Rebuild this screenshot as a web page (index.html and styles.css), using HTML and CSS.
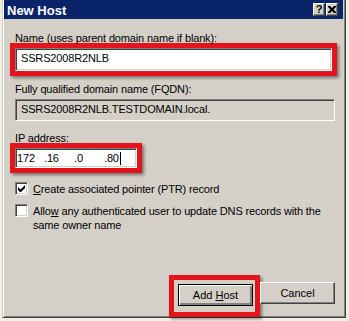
FILE: index.html
```html
<!DOCTYPE html>
<html lang="en">
<head>
    <meta charset="UTF-8">
    <title>New Host</title>
    <link rel="stylesheet" href="styles.css">
</head>
<body>
    <div class="window">
        <div class="titlebar">
            <span class="title">New Host</span>
            <div class="title-buttons">
                <span class="tbtn help">?</span>
                <span class="tbtn close">
                    <svg width="8" height="7" viewBox="0 0 8 7">
                        <path d="M0 0h2l2 2 2-2h2v1l-2.5 2.5L8 6v1H6L4 5 2 7H0V6l2.5-2.5L0 1z" fill="#000"/>
                    </svg>
                </span>
            </div>
        </div>

        <div class="content">
            <div class="label">Name (uses parent domain name if blank):</div>
            <div class="mark mark-name">
                <div class="field">SSRS2008R2NLB</div>
            </div>

            <div class="label label-fqdn">Fully qualified domain name (FQDN):</div>
            <div class="field field-disabled">SSRS2008R2NLB.TESTDOMAIN.local.</div>

            <div class="label label-ip">IP address:</div>
            <div class="mark mark-ip">
                <div class="field field-ip">
                    <span class="octet first">172</span>
                    <span class="octet">.16</span>
                    <span class="octet">.0</span>
                    <span class="octet last">.80</span>
                    <span class="caret"></span>
                </div>
            </div>

            <div class="check check-ptr">
                <span class="box">
                    <svg width="7" height="7" viewBox="0 0 7 7">
                        <path d="M0 2v3l2 2h1l4-4V0L2.5 4.5z" fill="#000"/>
                    </svg>
                </span>
                <span class="check-text"><u>C</u>reate associated pointer (PTR) record</span>
            </div>
            <div class="check">
                <span class="box"></span>
                <span class="check-text">Allo<u>w</u> any authenticated user to update DNS records with the same owner name</span>
            </div>
        </div>

        <div class="buttons">
            <div class="mark mark-btn">
                <button class="btn btn-default">Add <u>H</u>ost</button>
            </div>
            <button class="btn">Cancel</button>
        </div>
    </div>
</body>
</html>
```

FILE: styles.css
```css
html, body {
    margin: 0;
    padding: 0;
}
body {
    width: 349px;
    height: 321px;
    overflow: hidden;
    background-color: #f1efe2;
    font-family: "Liberation Sans", Arial, sans-serif;
    font-size: 11px;
    letter-spacing: -0.15px;
    color: #000;
}
.window {
    box-sizing: border-box;
    display: flex;
    flex-direction: column;
    margin-left: 2px;
    width: 344px;
    height: 318px;
    background-color: #d4d0c8;
    border: 1px solid #404040;
    border-top: 0;
    border-left-color: #d4d0c8;
    box-shadow: inset 1px 0 #fff, inset -1px -1px #808080;
}
.titlebar {
    display: flex;
    align-items: center;
    justify-content: space-between;
    height: 19px;
    margin: 0 2px 0 1px;
    padding: 0 5px 0 3px;
    background-color: #0a246a;
}
.title {
    color: #fff;
    font-weight: bold;
    font-size: 13px;
    letter-spacing: 0;
    padding-top: 1px;
}
.title-buttons {
    display: flex;
    gap: 1px;
}
.tbtn {
    box-sizing: border-box;
    display: flex;
    align-items: center;
    justify-content: center;
    width: 12px;
    height: 13px;
    background-color: #d4d0c8;
    border: 1px solid #404040;
    border-top-color: #fff;
    border-left-color: #fff;
    box-shadow: inset -1px -1px #808080;
}
.help {
    font-weight: bold;
    font-size: 11px;
    line-height: 11px;
    letter-spacing: 0;
}
.content {
    padding: 13px 10px 0 12px;
}
.label {
    line-height: 13px;
}
.label-fqdn {
    margin-top: 7px;
    margin-bottom: 3px;
}
.label-ip {
    margin-top: 11px;
}
.mark {
    box-sizing: border-box;
    border: 5px solid #e3141b;
    box-shadow: 2px 2px 3px rgba(0, 0, 0, 0.45);
}
.mark-name {
    margin: -2px -2px 0 -5px;
}
.mark-ip {
    width: 132px;
    margin: -2px 0 0 -5px;
}
.field {
    box-sizing: border-box;
    height: 23px;
    padding: 0 0 0 5px;
    line-height: 19px;
    background-color: #fff;
    border: 1px solid #fff;
    border-top-color: #808080;
    border-left-color: #808080;
    box-shadow: inset 1px 1px #404040, inset -1px -1px #d4d0c8;
    white-space: nowrap;
}
.field-disabled {
    height: 22px;
    line-height: 18px;
    background-color: #d4d0c8;
}
.field-ip {
    display: flex;
    align-items: center;
    height: 20px;
    padding-left: 1px;
}
.octet {
    width: 30px;
    flex: none;
}
.octet.first {
    width: 27px;
}
.octet.last {
    width: 16px;
}
.caret {
    width: 1px;
    height: 13px;
    background-color: #000;
}
.check {
    display: flex;
    align-items: flex-start;
    gap: 5px;
    margin-top: 8px;
    line-height: 14px;
}
.check-ptr {
    margin-top: 9px;
}
.box {
    box-sizing: border-box;
    flex: none;
    display: flex;
    align-items: center;
    justify-content: center;
    width: 13px;
    height: 13px;
    background-color: #fff;
    border: 1px solid #fff;
    border-top-color: #808080;
    border-left-color: #808080;
    box-shadow: inset 1px 1px #404040, inset -1px -1px #d4d0c8;
}
.buttons {
    display: flex;
    align-items: flex-start;
    justify-content: flex-end;
    margin-top: auto;
    padding: 0 10px 0 0;
}
.mark-btn {
    padding: 4px 2px 6px 4px;
}
.btn {
    box-sizing: border-box;
    width: 75px;
    height: 22px;
    margin: 0;
    padding: 0;
    font-family: "Liberation Sans", Arial, sans-serif;
    font-size: 11px;
    color: #000;
    background-color: #d4d0c8;
    border: 1px solid #404040;
    border-top-color: #fff;
    border-left-color: #fff;
    box-shadow: inset -1px -1px #808080;
}
.buttons > .btn {
    margin-top: 7px;
}
.btn-default {
    border-color: #000;
    box-shadow: inset 1px 1px #fff, inset -2px -2px #808080;
}
```
